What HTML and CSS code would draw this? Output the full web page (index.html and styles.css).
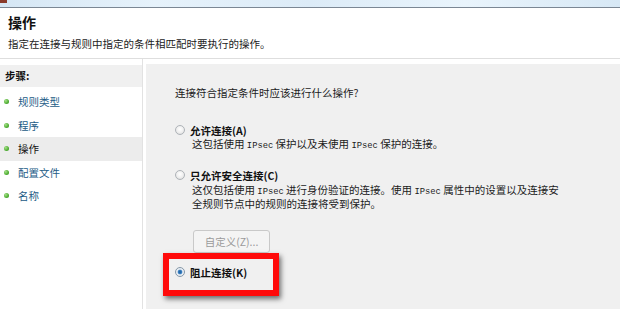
FILE: index.html
```html
<!DOCTYPE html>
<html lang="zh-CN">
<head>
<meta charset="utf-8">
<link rel="stylesheet" href="styles.css">
</head>
<body>
<div class="titlebar"><span class="appicon"></span></div>
<div class="header">
  <h1 class="title">操作</h1>
  <p class="subtitle">指定在连接与规则中指定的条件相匹配时要执行的操作。</p>
</div>
<div class="main">
  <aside class="sidebar">
    <div class="steps-head">步骤:</div>
    <ul class="steps">
      <li class="step"><span class="dot"></span><span class="link">规则类型</span></li>
      <li class="step"><span class="dot"></span><span class="link">程序</span></li>
      <li class="step current"><span class="dot"></span><span>操作</span></li>
      <li class="step"><span class="dot"></span><span class="link">配置文件</span></li>
      <li class="step"><span class="dot"></span><span class="link">名称</span></li>
    </ul>
  </aside>
  <section class="content">
    <p class="question">连接符合指定条件时应该进行什么操作?</p>

    <div class="option opt1">
      <div class="opt-title"><span class="radio"></span><span class="label">允许连接(A)</span></div>
      <p class="desc">这包括使用 <span class="mono">IPsec</span> 保护以及未使用 <span class="mono">IPsec</span> 保护的连接。</p>
    </div>

    <div class="option opt2">
      <div class="opt-title"><span class="radio"></span><span class="label">只允许安全连接(C)</span></div>
      <p class="desc tight">这仅包括使用 <span class="mono">IPsec</span> 进行身份验证的连接。使用 <span class="mono">IPsec</span> 属性中的设置以及连接安<br>全规则节点中的规则的连接将受到保护。</p>
      <button class="btn" disabled>自定义(Z)...</button>
    </div>

    <div class="highlight">
      <div class="opt-title"><span class="radio checked"></span><span class="label">阻止连接(K)</span></div>
    </div>
  </section>
</div>
</body>
</html>
```

FILE: styles.css
```css
* { box-sizing: border-box; }
html, body {
  margin: 0;
  padding: 0;
  width: 620px;
  height: 309px;
  overflow: hidden;
  background: #ffffff;
  font-family: "Noto Sans CJK SC", "Noto Sans", sans-serif;
  font-size: 10.5px;
  color: #1b1b1b;
}
p { margin: 0; }

.titlebar {
  height: 8px;
  background: linear-gradient(90deg, #d5e6f4 0%, #e6f2fb 25%, #dcebf7 50%, #e9f4fc 75%, #d7e8f5 100%);
  border-bottom: 1px solid #7b8794;
  position: relative;
}
.appicon {
  position: absolute;
  left: 0;
  top: 0;
  width: 7px;
  height: 3px;
  background: #8a3a2a;
}

.header {
  padding: 5px 8px 7px;
  border-bottom: 1px solid #dedede;
}
.title {
  margin: 0;
  font-size: 14px;
  line-height: 18px;
  font-weight: 700;
  color: #111;
}
.subtitle {
  margin-top: 6px;
  line-height: 14px;
  white-space: nowrap;
}

.main {
  display: flex;
  height: 250px;
}

.sidebar {
  width: 143px;
  flex: none;
  border-right: 1px solid #e2e2e2;
  padding-top: 6px;
  background: #fff;
}
.steps-head {
  height: 22px;
  line-height: 22px;
  padding-left: 5px;
  background: #f0f0f0;
  font-weight: 700;
  color: #111;
}
.steps {
  list-style: none;
  margin: 3px 0 0;
  padding: 0;
}
.step {
  height: 23.5px;
  display: flex;
  align-items: center;
  gap: 9px;
  padding-left: 4px;
}
.step.current { background: #ececec; color: #111; }
.dot {
  width: 5px;
  height: 5px;
  border-radius: 50%;
  background: radial-gradient(circle at 35% 35%, #a6e08a 0%, #4fae32 60%, #2f8a1e 100%);
  flex: none;
}
.link { color: #235b86; }

.content {
  flex: 1;
  margin: 5px 0 0 3px;
  background: #f0f0f0;
  padding: 22px 0 0 29px;
}
.question { line-height: 14px; white-space: nowrap; }

.option { white-space: nowrap; }
.opt1 { margin-top: 23px; }
.opt2 { margin-top: 15px; }

.opt-title {
  display: flex;
  align-items: center;
  gap: 5px;
  height: 14px;
}
.label { font-weight: 700; color: #111; }

.radio {
  width: 10px;
  height: 10px;
  border-radius: 50%;
  border: 1px solid #aeb3b8;
  background: radial-gradient(circle at 50% 40%, #ffffff 0%, #eeeeee 55%, #d2d2d2 100%);
  flex: none;
}
.radio.checked {
  border-color: #8497a8;
  background: radial-gradient(circle, #1a5a96 0%, #3b82c4 34%, #e4ebf2 48%, #f2f2f2 100%);
}

.desc {
  margin-left: 17px;
  line-height: 13px;
}
.desc.tight {
  margin-top: 2px;
  line-height: 11px;
}
.mono {
  font-family: "Liberation Mono", "DejaVu Sans Mono", monospace;
  font-size: 8.8px;
}

.btn {
  display: block;
  margin: 21px 0 0 18px;
  width: 77px;
  height: 23px;
  padding: 0;
  border: 1px solid #c9c9c9;
  border-radius: 3px;
  background: #f4f4f4;
  color: #9a9a9a;
  font-family: inherit;
  font-size: 10.5px;
  text-align: center;
}

.highlight {
  margin-left: -12px;
  width: 116px;
  height: 43px;
  border: 6px solid #ff0a0a;
  padding: 6px 0 0 6px;
  box-shadow: 2px 3px 5px rgba(0, 0, 0, 0.55);
}
```
